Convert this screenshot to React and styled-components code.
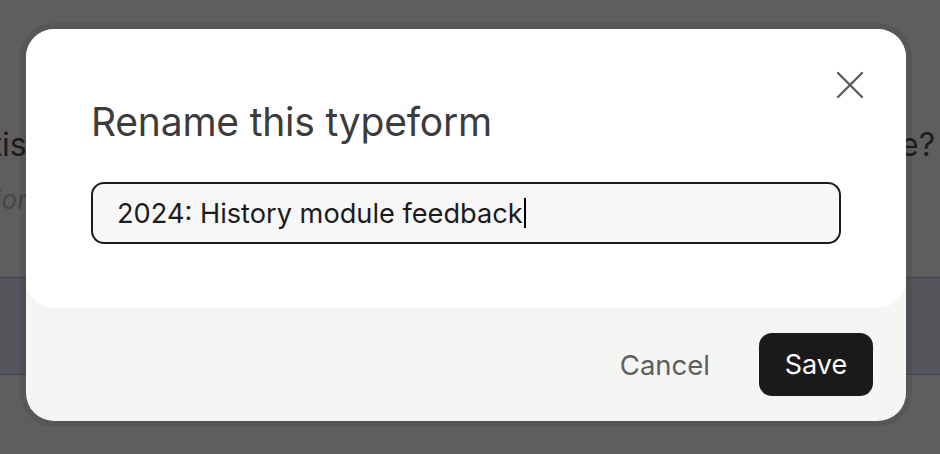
import React from 'react';
import styled, { createGlobalStyle } from 'styled-components';

const GlobalStyle = createGlobalStyle`
  html, body {
    margin: 0;
    padding: 0;
    width: 940px;
    height: 454px;
    overflow: hidden;
    background: #ffffff;
    font-family: Inter, "Noto Sans", "Liberation Sans", sans-serif;
  }
`;

// page behind the dialog
const Page = styled.div`
  position: relative;
  width: 940px;
  height: 454px;
  overflow: hidden;
  background: #ffffff;
  padding-top: 125px;
  box-sizing: border-box;
`;

const QuestionRow = styled.div`
  display: flex;
  justify-content: space-between;
  white-space: nowrap;
  font-size: 32px;
  line-height: 40px;
  color: #505050;
`;

const QuestionStart = styled.span`
  margin-left: -121px;
`;

const QuestionEnd = styled.span`
  margin-right: 5px;
`;

const Hint = styled.div`
  margin-top: 18px;
  margin-left: -108px;
  font-size: 26px;
  line-height: 34px;
  font-style: italic;
  color: #c4c4c4;
  white-space: nowrap;
`;

const AnswerBand = styled.div`
  margin-top: 60px;
  height: 96px;
  background: #e6e8f6;
  border-top: 1px solid #a8b6f0;
  border-bottom: 1px solid #a8b6f0;
`;

const Overlay = styled.div`
  position: absolute;
  inset: 0;
  background: rgba(0, 0, 0, 0.63);
  display: flex;
  align-items: flex-start;
  padding: 29px 0 0 26px;
  box-sizing: border-box;
`;

const Dialog = styled.div`
  width: 880px;
  height: 392px;
  display: flex;
  flex-direction: column;
  background: #f5f5f3;
  border-radius: 28px;
  overflow: hidden;
  box-shadow: 0 0 0 6px rgba(0, 0, 0, 0.075);
`;

const Body = styled.div`
  position: relative;
  height: 279px;
  background: #ffffff;
  border-radius: 28px;
  padding: 70px 65px 0;
  box-sizing: border-box;
`;

const CloseButton = styled.button`
  position: absolute;
  top: 38px;
  right: 38px;
  width: 36px;
  height: 36px;
  padding: 0;
  border: none;
  background: transparent;
  display: flex;
  align-items: center;
  justify-content: center;
  cursor: pointer;
`;

const Title = styled.h2`
  margin: 0;
  font-size: 39px;
  line-height: 46px;
  font-weight: 400;
  color: #3c3c3c;
  letter-spacing: -0.2px;
`;

const InputBox = styled.div`
  margin-top: 37px;
  height: 62px;
  display: flex;
  align-items: center;
  padding: 0 24px;
  border: 2px solid #1c1c1c;
  border-radius: 13px;
  background: #f7f7f7;
  box-sizing: border-box;
  font-size: 27.2px;
  color: #1c1c1c;
`;

const Caret = styled.span`
  display: inline-block;
  width: 2px;
  height: 30px;
  margin-left: 1px;
  background: #000000;
`;

const Footer = styled.div`
  flex: 1;
  display: flex;
  align-items: center;
  justify-content: flex-end;
  gap: 49px;
  padding: 0 33px;
`;

const TextButton = styled.button`
  border: none;
  background: transparent;
  padding: 0;
  font-family: inherit;
  font-size: 27.5px;
  color: #5e5e5e;
  cursor: pointer;
`;

const PrimaryButton = styled.button`
  width: 114px;
  height: 63px;
  border: none;
  border-radius: 13px;
  background: #1a1a1a;
  color: #ffffff;
  font-family: inherit;
  font-size: 27px;
  cursor: pointer;
`;

export default function App() {
  return (
    <>
      <GlobalStyle />
      <Page>
        <QuestionRow>
          <QuestionStart>How satisfied were you with the</QuestionStart>
          <QuestionEnd>overall pace?</QuestionEnd>
        </QuestionRow>
        <Hint>Description (optional)</Hint>
        <AnswerBand />
        <Overlay>
          <Dialog>
            <Body>
              <CloseButton aria-label="Close">
                <svg width="28" height="28" viewBox="0 0 28 28" fill="none" stroke="#5e5e5e" strokeWidth="2.4" strokeLinecap="round">
                  <line x1="2" y1="2" x2="26" y2="26" />
                  <line x1="26" y1="2" x2="2" y2="26" />
                </svg>
              </CloseButton>
              <Title>Rename this typeform</Title>
              <InputBox>
                2024: History module feedback
                <Caret />
              </InputBox>
            </Body>
            <Footer>
              <TextButton>Cancel</TextButton>
              <PrimaryButton>Save</PrimaryButton>
            </Footer>
          </Dialog>
        </Overlay>
      </Page>
    </>
  );
}
